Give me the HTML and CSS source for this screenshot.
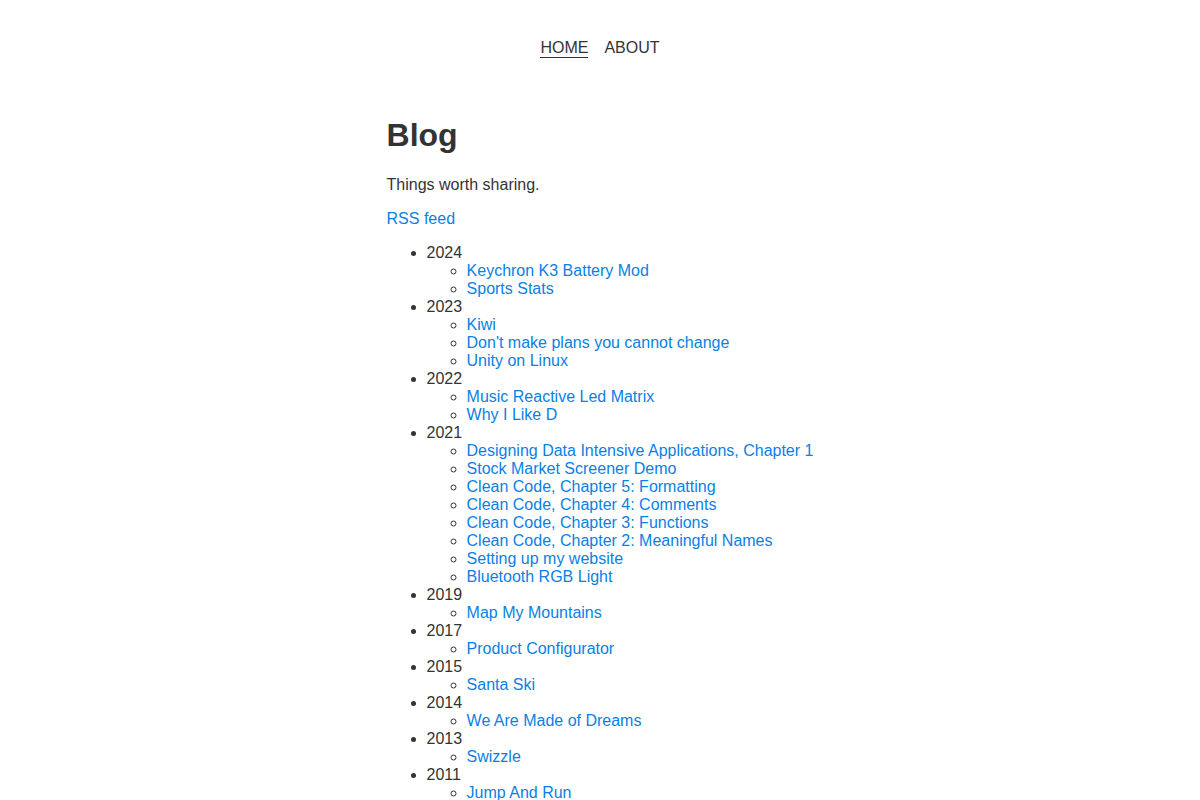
FILE: index.html
```html
<!DOCTYPE html>
<html lang="en">
<head>
<meta charset="utf-8">
<title>Blog</title>
<link rel="stylesheet" href="styles.css">
</head>
<body>
<header class="site-header">
  <nav class="nav">
    <a class="nav-link active" href="#">HOME</a>
    <a class="nav-link" href="#">ABOUT</a>
  </nav>
</header>
<main class="content">
  <h1 class="title">Blog</h1>
  <p class="lead">Things worth sharing.</p>
  <p class="rss"><a href="#">RSS feed</a></p>
  <ul class="years">
    <li>2024
      <ul>
        <li><a href="#">Keychron K3 Battery Mod</a></li>
        <li><a href="#">Sports Stats</a></li>
      </ul>
    </li>
    <li>2023
      <ul>
        <li><a href="#">Kiwi</a></li>
        <li><a href="#">Don't make plans you cannot change</a></li>
        <li><a href="#">Unity on Linux</a></li>
      </ul>
    </li>
    <li>2022
      <ul>
        <li><a href="#">Music Reactive Led Matrix</a></li>
        <li><a href="#">Why I Like D</a></li>
      </ul>
    </li>
    <li>2021
      <ul>
        <li><a href="#">Designing Data Intensive Applications, Chapter 1</a></li>
        <li><a href="#">Stock Market Screener Demo</a></li>
        <li><a href="#">Clean Code, Chapter 5: Formatting</a></li>
        <li><a href="#">Clean Code, Chapter 4: Comments</a></li>
        <li><a href="#">Clean Code, Chapter 3: Functions</a></li>
        <li><a href="#">Clean Code, Chapter 2: Meaningful Names</a></li>
        <li><a href="#">Setting up my website</a></li>
        <li><a href="#">Bluetooth RGB Light</a></li>
      </ul>
    </li>
    <li>2019
      <ul>
        <li><a href="#">Map My Mountains</a></li>
      </ul>
    </li>
    <li>2017
      <ul>
        <li><a href="#">Product Configurator</a></li>
      </ul>
    </li>
    <li>2015
      <ul>
        <li><a href="#">Santa Ski</a></li>
      </ul>
    </li>
    <li>2014
      <ul>
        <li><a href="#">We Are Made of Dreams</a></li>
      </ul>
    </li>
    <li>2013
      <ul>
        <li><a href="#">Swizzle</a></li>
      </ul>
    </li>
    <li>2011
      <ul>
        <li><a href="#">Jump And Run</a></li>
      </ul>
    </li>
  </ul>
</main>
</body>
</html>
```

FILE: styles.css
```css
html, body {
  margin: 0;
  padding: 0;
  background: #ffffff;
}

body {
  font-family: "Liberation Sans", Arial, sans-serif;
  font-size: 16px;
  color: #333333;
}

a {
  color: #0a7fe6;
  text-decoration: none;
}

.site-header {
  padding: 39px 0 38px;
}

.nav {
  display: flex;
  justify-content: center;
  gap: 16px;
}

.nav-link {
  color: #333333;
  border-bottom: 1px solid transparent;
}

.nav-link.active {
  border-bottom-color: #333333;
}

.content {
  width: fit-content;
  margin: 0 auto;
}

.title {
  font-size: 32px;
  font-weight: bold;
  margin: 21.44px 0;
}

.lead,
.rss {
  margin: 16px 0;
}

.years {
  margin: 16px 0;
  padding-left: 40px;
}

.years ul {
  margin: 0;
  padding-left: 40px;
  list-style-type: circle;
}
```
